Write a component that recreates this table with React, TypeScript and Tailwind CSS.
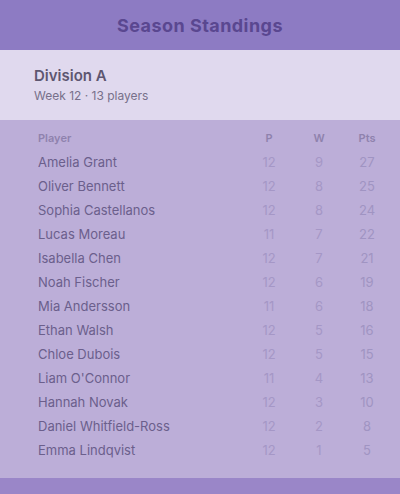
import React from "react";

interface Row {
  name: string;
  played: number;
  won: number;
  pts: number;
}

const rows: Row[] = [
  { name: "Amelia Grant", played: 12, won: 9, pts: 27 },
  { name: "Oliver Bennett", played: 12, won: 8, pts: 25 },
  { name: "Sophia Castellanos", played: 12, won: 8, pts: 24 },
  { name: "Lucas Moreau", played: 11, won: 7, pts: 22 },
  { name: "Isabella Chen", played: 12, won: 7, pts: 21 },
  { name: "Noah Fischer", played: 12, won: 6, pts: 19 },
  { name: "Mia Andersson", played: 11, won: 6, pts: 18 },
  { name: "Ethan Walsh", played: 12, won: 5, pts: 16 },
  { name: "Chloe Dubois", played: 12, won: 5, pts: 15 },
  { name: "Liam O'Connor", played: 11, won: 4, pts: 13 },
  { name: "Hannah Novak", played: 12, won: 3, pts: 10 },
  { name: "Daniel Whitfield-Ross", played: 12, won: 2, pts: 8 },
  { name: "Emma Lindqvist", played: 12, won: 1, pts: 5 },
];

const App: React.FC = () => {
  return (
    <div
      className="w-[400px] h-[494px] flex flex-col bg-[#bcaed8] overflow-hidden"
      style={{ fontFamily: "Inter, 'Liberation Sans', sans-serif" }}
    >
      <header className="h-[50px] flex items-center justify-center bg-[#8d7bc3]">
        <h1 className="text-[18px] font-bold text-[#5a4790] tracking-wide">Season Standings</h1>
      </header>

      <div className="h-[70px] flex flex-col justify-center px-[34px] bg-[#e0d9ee]">
        <p className="text-[15px] font-semibold text-[#5d5670]">Division A</p>
        <p className="text-[12px] text-[#77708a]">Week 12 · 13 players</p>
      </div>

      <div className="flex-1 flex flex-col pt-[10px]">
        <div className="grid grid-cols-[1fr_50px_50px_46px] px-[38px] pr-[10px] text-[11px] font-semibold text-[#8f82ad] pb-[4px]">
          <span>Player</span>
          <span className="text-center">P</span>
          <span className="text-center">W</span>
          <span className="text-center">Pts</span>
        </div>
        {rows.map((r) => (
          <div
            key={r.name}
            className="grid grid-cols-[1fr_50px_50px_46px] items-center h-[24px] px-[38px] pr-[10px] text-[13px]"
          >
            <span className="text-[#6b5f8c] truncate">{r.name}</span>
            <span className="text-center text-[#a597c6]">{r.played}</span>
            <span className="text-center text-[#a597c6]">{r.won}</span>
            <span className="text-center text-[#a094c2]">{r.pts}</span>
          </div>
        ))}
      </div>

      <footer className="h-[16px] bg-[#9a86c8]" />
    </div>
  );
};

export default App;
